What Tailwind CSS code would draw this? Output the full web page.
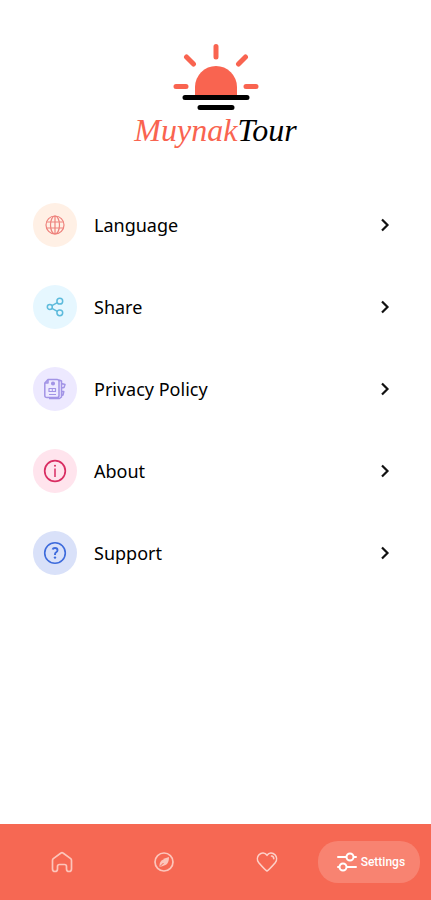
<!DOCTYPE html>
<html lang="en">
<head>
<meta charset="utf-8">
<meta name="viewport" content="width=device-width, initial-scale=1">
<title>Muynak Tour – Settings</title>
<script src="https://cdn.jsdelivr.net/npm/@tailwindcss/browser@4"></script>
</head>
<body class="bg-white text-black font-['Noto_Sans',sans-serif]">
<div class="flex min-h-screen flex-col">
  <header class="flex flex-col items-center pt-11">
    <svg class="h-[66px] w-[86px]" viewBox="0 0 86 66" fill="none" stroke-linecap="round" aria-hidden="true">
      <path d="M22 52V43a21 21 0 0 1 42 0V52Z" fill="#f96450"/>
      <path d="M43 2.500V13M13.500 13l7 7M72.500 13l-7 7M3 42.500H13M73 42.500H83" stroke="#f96450" stroke-width="5"/>
      <path d="M12 53.500H74M27 63.500H59" stroke="#000" stroke-width="5"/>
    </svg>
    <h1 class="text-[32px] leading-10 italic text-[#f96450] font-['Liberation_Serif',cursive]">Muynak<span class="text-black">Tour</span></h1>
  </header>

  <main class="flex-1 px-[33px] pt-[53px]">
    <ul class="flex flex-col gap-[38px]">
      <li><a href="#language" class="flex items-center gap-[17px]">
        <span class="flex size-11 items-center justify-center rounded-full bg-[#fff0e5]">
          <svg class="size-5" viewBox="0 0 20 20" fill="none" stroke="#ee827c" stroke-width="1.200"><circle cx="10" cy="10" r="9"/><ellipse cx="10" cy="10" rx="4.500" ry="9"/><path d="M10 1v18M1.500 7h17M1.500 13h17"/></svg>
        </span>
        <span class="flex-1 text-lg">Language</span>
        <svg class="mr-2 h-3.5 w-2.5" viewBox="0 0 10 14" fill="none" stroke="#111" stroke-width="2.200"><path d="M2 1.500 7.500 7 2 12.500"/></svg>
      </a></li>
      <li><a href="#share" class="flex items-center gap-[17px]">
        <span class="flex size-11 items-center justify-center rounded-full bg-[#e6f7ff]">
          <svg class="size-5" viewBox="0 0 20 20" fill="none" stroke="#5dbbdc" stroke-width="1.500"><circle cx="4.800" cy="10" r="2.500"/><circle cx="14.800" cy="4.200" r="2.900"/><circle cx="14.800" cy="15.800" r="2.900"/><path d="m7 8.700 5.300-3M7 11.300l5.300 3"/></svg>
        </span>
        <span class="flex-1 text-lg">Share</span>
        <svg class="mr-2 h-3.5 w-2.5" viewBox="0 0 10 14" fill="none" stroke="#111" stroke-width="2.200"><path d="M2 1.500 7.500 7 2 12.500"/></svg>
      </a></li>
      <li><a href="#privacy" class="flex items-center gap-[17px]">
        <span class="flex size-11 items-center justify-center rounded-full bg-[#ede9ff]">
          <svg class="size-[22px]" viewBox="0 0 22 22" fill="none" stroke="#a294e6" stroke-width="1.500" stroke-linejoin="round"><path d="M4 1.500H13q2 0 2 2V17.500q0 2-2 2H3Q.8 19.500.8 17.500V5ZM4 1.500V5H.8M15 2l2.500 1V19l-2 1.500H5M17.500 5.500l3.500 1-1 3-2.500.5M17.500 13.500h2.300L19 17l-1.500.5"/><circle cx="9" cy="5.500" r="1.300" fill="#a294e6"/><path d="M5 10.500h6.500v3H5zM5 16.500h7" stroke-width="1.200"/><path d="M8.300 10.500v3" stroke-width="1"/></svg>
        </span>
        <span class="flex-1 text-lg">Privacy Policy</span>
        <svg class="mr-2 h-3.5 w-2.5" viewBox="0 0 10 14" fill="none" stroke="#111" stroke-width="2.200"><path d="M2 1.500 7.500 7 2 12.500"/></svg>
      </a></li>
      <li><a href="#about" class="flex items-center gap-[17px]">
        <span class="flex size-11 items-center justify-center rounded-full bg-[#ffe4ed]">
          <svg class="size-6" viewBox="0 0 24 24" fill="none" stroke="#d92d62" stroke-width="1.700"><circle cx="12" cy="12" r="10.300"/><path d="M12 9.500V18" stroke-width="1.500"/><circle cx="12" cy="6.800" r="1" fill="#d92d62" stroke="none"/></svg>
        </span>
        <span class="flex-1 text-lg">About</span>
        <svg class="mr-2 h-3.5 w-2.5" viewBox="0 0 10 14" fill="none" stroke="#111" stroke-width="2.200"><path d="M2 1.500 7.500 7 2 12.500"/></svg>
      </a></li>
      <li><a href="#support" class="flex items-center gap-[17px]">
        <span class="flex size-11 items-center justify-center rounded-full bg-[#d9e1f9]">
          <svg class="size-6" viewBox="0 0 24 24" fill="none" stroke="#3d6bdc" stroke-width="1.600"><circle cx="12" cy="12" r="10.300"/><path d="M9.600 8.500Q10 7 12 7q2.500 0 2.500 2.200 0 1.200-1.300 2T12 13.500V14" stroke-width="1.900"/><circle cx="12" cy="16.600" r="1.200" fill="#3d6bdc" stroke="none"/></svg>
        </span>
        <span class="flex-1 text-lg">Support</span>
        <svg class="mr-2 h-3.5 w-2.5" viewBox="0 0 10 14" fill="none" stroke="#111" stroke-width="2.200"><path d="M2 1.500 7.500 7 2 12.500"/></svg>
      </a></li>
    </ul>
  </main>

  <nav aria-label="Main" class="grid grid-cols-4 items-center bg-[#f66853] px-[11px] py-[17px]">
    <a href="#home" aria-label="Home" class="flex justify-center">
      <svg class="size-[22px]" viewBox="0 0 22 22" fill="none" stroke="#fcc5bb" stroke-width="1.700" stroke-linejoin="round"><path d="M1.500 9.500Q1.500 8.300 2.300 7.600L10 2q1-.8 2 0l7.700 5.600q.8.700.8 1.900V18q0 2.500-2.500 2.500T15.500 18V15.500Q15.500 13.500 13.500 13.500H8.500Q6.500 13.500 6.500 15.500V18q0 2.500-2.500 2.500T1.500 18Z"/></svg>
    </a>
    <a href="#explore" aria-label="Explore" class="flex justify-center">
      <svg class="size-5" viewBox="0 0 20 20" fill="none" stroke="#fcc5bb" stroke-width="1.700"><circle cx="10" cy="10" r="9"/><path d="M15 5Q15 11.500 11.500 13T5.500 15Q5 10.500 8 8.200T15 5Z" fill="#fcc5bb" stroke="none"/><path d="m6 14.500 3.500-3.500" stroke="#f66853" stroke-width="1"/></svg>
    </a>
    <a href="#favourites" aria-label="Favourites" class="flex justify-center">
      <svg class="size-[22px]" viewBox="0 0 22 22" fill="none" stroke="#fdd0c8" stroke-width="1.600" stroke-linejoin="round" stroke-linecap="round"><path d="M11 20Q9 19 2.800 11.800C.5 9 1.500 5.500 3 3.800 5.500 1.200 9 1.500 11 4.300 13 1.500 16.500 1.200 19 3.800 20.500 5.500 21.500 9 19.200 11.800Q13 19 11 20Z"/><path d="M15.500 5q2.200.3 2.300 2.800"/></svg>
    </a>
    <a href="#settings" aria-current="page" class="flex h-[42px] items-center justify-center gap-1 rounded-[20px] bg-[#f88371] pl-1 text-white">
      <svg class="size-5" viewBox="0 0 20 20" fill="none" stroke="#fff" stroke-width="2" stroke-linecap="round"><path d="M1 5h8M17 5h2M1 15h1M10 15h9"/><circle cx="13" cy="5" r="3.500"/><circle cx="6" cy="15" r="3.500"/></svg>
      <span class="text-xs font-medium font-[Roboto,sans-serif]">Settings</span>
    </a>
  </nav>
</div>
</body>
</html>
